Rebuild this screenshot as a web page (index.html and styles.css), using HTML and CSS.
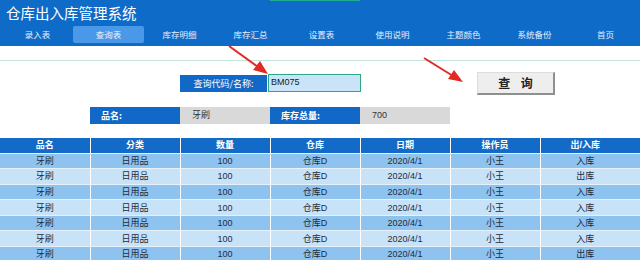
FILE: index.html
```html
<!DOCTYPE html>
<html lang="zh">
<head>
<meta charset="utf-8">
<title>仓库出入库管理系统</title>
<link rel="stylesheet" href="styles.css">
</head>
<body>
<div class="page">
  <header class="topbar">
    <span class="sel-mark"></span>
    <h1 class="title">仓库出入库管理系统</h1>
    <nav class="nav">
      <span class="nav-item">录入表</span>
      <span class="nav-item active">查询表</span>
      <span class="nav-item">库存明细</span>
      <span class="nav-item">库存汇总</span>
      <span class="nav-item">设置表</span>
      <span class="nav-item">使用说明</span>
      <span class="nav-item">主题颜色</span>
      <span class="nav-item">系统备份</span>
      <span class="nav-item">首页</span>
    </nav>
  </header>
  <div class="rule"></div>
  <div class="query-row">
    <div class="label q-label">查询代码/名称:</div>
    <div class="q-input">BM075</div>
    <button class="q-btn">查 询</button>
  </div>
  <div class="info-row">
    <div class="label info-cell">品名:</div>
    <div class="value info-cell">牙刷</div>
    <div class="label info-cell">库存总量:</div>
    <div class="value info-cell">700</div>
  </div>
  <table class="grid">
    <thead>
      <tr><th>品名</th><th>分类</th><th>数量</th><th>仓库</th><th>日期</th><th>操作员</th><th class="last">出/入库</th><th class="pad"></th></tr>
    </thead>
    <tbody>
      <tr><td>牙刷</td><td>日用品</td><td>100</td><td>仓库D</td><td>2020/4/1</td><td>小王</td><td class="last">入库</td><td class="pad"></td></tr>
      <tr><td>牙刷</td><td>日用品</td><td>100</td><td>仓库D</td><td>2020/4/1</td><td>小王</td><td class="last">出库</td><td class="pad"></td></tr>
      <tr><td>牙刷</td><td>日用品</td><td>100</td><td>仓库D</td><td>2020/4/1</td><td>小王</td><td class="last">入库</td><td class="pad"></td></tr>
      <tr><td>牙刷</td><td>日用品</td><td>100</td><td>仓库D</td><td>2020/4/1</td><td>小王</td><td class="last">入库</td><td class="pad"></td></tr>
      <tr><td>牙刷</td><td>日用品</td><td>100</td><td>仓库D</td><td>2020/4/1</td><td>小王</td><td class="last">入库</td><td class="pad"></td></tr>
      <tr><td>牙刷</td><td>日用品</td><td>100</td><td>仓库D</td><td>2020/4/1</td><td>小王</td><td class="last">入库</td><td class="pad"></td></tr>
      <tr><td>牙刷</td><td>日用品</td><td>100</td><td>仓库D</td><td>2020/4/1</td><td>小王</td><td class="last">出库</td><td class="pad"></td></tr>
    </tbody>
  </table>
  <svg class="arrows" width="640" height="260" viewBox="0 0 640 260">
    <line x1="229" y1="46" x2="258" y2="67" stroke="#e32a22" stroke-width="2"/>
    <polygon points="268,74 253,70 260,61" fill="#e32a22"/>
    <line x1="424" y1="58" x2="453" y2="76" stroke="#e32a22" stroke-width="2"/>
    <polygon points="463,82 448,79 454,70" fill="#e32a22"/>
  </svg>
</div>
</body>
</html>
```

FILE: styles.css
```css
* { box-sizing: border-box; }
html, body { margin: 0; padding: 0; background: #ffffff; }
body {
  font-family: "Noto Sans CJK SC", "Liberation Sans", sans-serif;
  width: 640px;
  height: 260px;
  overflow: hidden;
}
.page { position: relative; width: 640px; height: 260px; }

.topbar {
  position: relative;
  height: 46px;
  background: #0f6bc8;
  padding: 0 0 0 2px;
  display: flex;
  flex-direction: column;
}
.sel-mark {
  position: absolute;
  left: 270px;
  top: 0;
  width: 90px;
  height: 1px;
  background: #1fae94;
}
.title {
  margin: 0;
  padding: 3px 0 0 4px;
  height: 25px;
  font-size: 14.5px;
  line-height: 20px;
  font-weight: 400;
  color: #ffffff;
}
.nav {
  display: grid;
  grid-template-columns: repeat(9, 71px);
  height: 17px;
  margin-top: 1px;
}
.nav-item {
  font-size: 8.5px;
  line-height: 17px;
  color: #e4efff;
  text-align: center;
}
.nav-item.active {
  background: #4a98e8;
  border-radius: 2px;
  color: #e8f2ff;
}

.rule {
  margin-top: 14px;
  height: 1px;
  background: #c3e5dc;
}

.query-row {
  display: flex;
  align-items: center;
  margin-top: 11px;
  padding-left: 180px;
  height: 22px;
}
.label {
  background: #1168c6;
  color: #ffffff;
  font-size: 9px;
}
.q-label {
  width: 87px;
  height: 17px;
  line-height: 17px;
  text-align: center;
}
.q-input {
  width: 93px;
  height: 18px;
  margin-left: 1px;
  background: #c9e3f8;
  border: 1.5px solid #2da884;
  font-family: "Liberation Sans", "Noto Sans CJK SC", sans-serif;
  font-size: 9px;
  line-height: 15px;
  padding-left: 2px;
  color: #1a1a1a;
}
.q-btn {
  margin-left: 116px;
  width: 78px;
  height: 23px;
  padding: 0;
  background: #eeeeee;
  border: 1px solid #dcdcdc;
  border-right: 2px solid #8f8f8f;
  border-bottom: 2px solid #8f8f8f;
  font-family: "Noto Sans CJK SC", sans-serif;
  font-size: 12px;
  font-weight: 700;
  color: #222222;
  letter-spacing: 4px;
  text-indent: 4px;
}

.info-row {
  display: flex;
  margin-top: 13px;
  padding-left: 90px;
  height: 17px;
}
.info-cell {
  width: 90px;
  height: 17px;
  line-height: 17px;
  font-size: 9px;
}
.info-cell.label { padding-left: 11px; font-weight: 700; }
.value {
  background: #d9d9d9;
  color: #333333;
  padding-left: 12px;
  font-family: "Liberation Sans", "Noto Sans CJK SC", sans-serif;
}

.grid {
  margin-top: 14px;
  border-collapse: collapse;
  table-layout: fixed;
  width: 640px;
}
.grid th, .grid td {
  width: 90px;
  padding: 0;
  text-align: center;
  font-size: 9px;
  border-right: 1px solid #ffffff;
  border-bottom: 1px solid #e6f1fb;
  font-family: "Liberation Sans", "Noto Sans CJK SC", sans-serif;
}
.grid th.last, .grid td.last { border-right: none; }
.grid th.pad, .grid td.pad { width: 10px; border-right: none; }
.grid th {
  background: #136ac7;
  color: #ffffff;
  height: 15px;
  line-height: 14px;
  font-weight: 700;
}
.grid td {
  height: 15.6px;
  line-height: 14px;
  color: #1d2d3d;
}
.grid tbody tr:nth-child(odd) td { background: #8ec2ef; }
.grid tbody tr:nth-child(even) td { background: #c8e2f8; }

.arrows {
  position: absolute;
  left: 0;
  top: 0;
  pointer-events: none;
}
```
